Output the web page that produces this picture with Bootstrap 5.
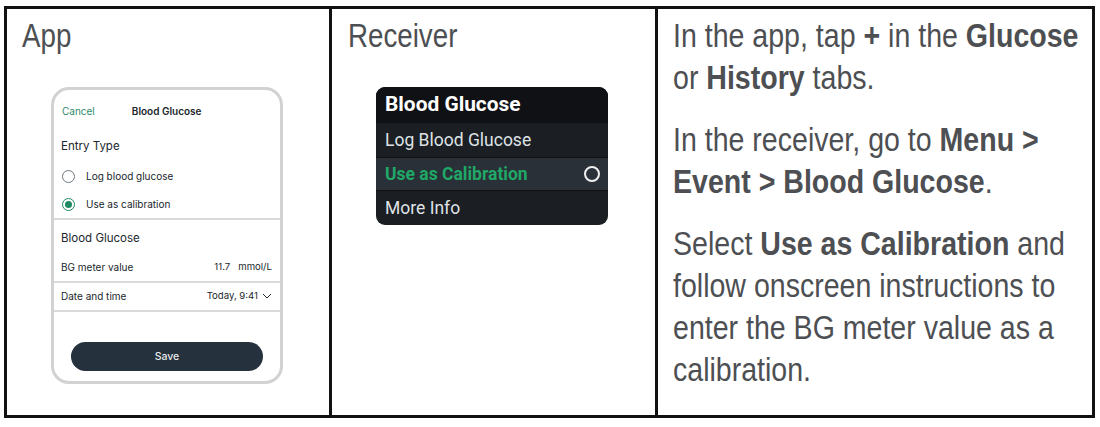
<!DOCTYPE html>
<html lang="en">
<head>
<meta charset="UTF-8">
<title>Use as Calibration</title>
<link rel="stylesheet" href="https://cdn.jsdelivr.net/npm/bootstrap@5.3.0/dist/css/bootstrap.min.css">
<style>
html, body { background: #fff; height: 427px; overflow: hidden; }
body { padding: 6px 5px 9px 4px; }
.frame { height: 412px; border: 3px solid #111; font-family: "Liberation Sans", sans-serif; color: #4d4f53; }
.pane-a { width: 325px; padding: 6px 0 0 15px; border-right: 3px solid #111; }
.pane-b { width: 326px; padding: 6px 0 0 16px; border-right: 3px solid #111; }
.pane-c { flex: 1; padding: 6px 0 0 15px; overflow: hidden; }
.pane-title { font-size: 33px; line-height: 42px; transform: scaleX(.84); transform-origin: left top; }
.copy { width: 480px; font-size: 33px; line-height: 42px; white-space: nowrap; transform: scaleX(.865); transform-origin: left top; }
.copy p { margin: 0 0 20px; }

.phone { width: 232px; height: 297px; margin: 30px 0 0 29px; border: 3px solid #d2d2d2; border-radius: 18px; font-family: Inter, "Liberation Sans", sans-serif; font-size: 10px; color: #20262c; }
.phone-head { height: 42px; padding: 0 8px; }
.phone-cancel { color: #2f8a68; }
.phone-title { margin-left: 37px; font-weight: 600; }
.phone-label { font-size: 11.5px; padding-left: 7px; }
.label-type { height: 30px; }
.label-bg { height: 36px; padding-top: 2px; }
.radio-row { height: 28px; padding-left: 8px; gap: 11px; }
.radio-dot { width: 13px; height: 13px; border-radius: 50%; border: 1.5px solid #6d7780; flex: none; }
.radio-dot.on { border-color: #1d8a62; padding: 2px; }
.radio-dot.on::after { content: ""; display: block; width: 100%; height: 100%; border-radius: 50%; background: #1d8a62; }
.phone-line { border-top: 2px solid #d9d9d9; }
.phone-row { padding: 0 8px 0 7px; }
.phone-val { font-size: 9.6px; }
.row-meter { height: 25px; padding-bottom: 3px; }
.row-date { height: 27px; }
.save-btn { width: 192px; height: 29px; margin: 30px auto 0; background: #25313c; color: #e8eaec; border-radius: 15px; font-size: 10.5px; font-weight: 500; }

.receiver { width: 232px; height: 138px; margin: 30px 0 0 28px; background: #1b1e23; border-radius: 9px; overflow: hidden; font-family: Roboto, "Liberation Sans", sans-serif; font-size: 17.5px; color: #dfe3e6; }
.rcv-head { height: 36px; background: #101114; color: #fff; font-weight: 700; font-size: 20.9px; padding: 0 9px; }
.rcv-item { height: 34px; padding: 0 8px 0 9px; }
.rcv-item.active { background: #2a3038; color: #1fa866; font-weight: 700; border-top: 1px solid #101114; border-bottom: 1px solid #101114; }
.rcv-ring { width: 16px; height: 16px; border: 2.5px solid #f0f0f0; border-radius: 50%; }
</style>
</head>
<body>
<div class="frame d-flex">
    <div class="pane-a">
        <div class="pane-title">App</div>
        <div class="phone">
            <div class="phone-head d-flex align-items-center">
                <span class="phone-cancel">Cancel</span>
                <span class="phone-title">Blood Glucose</span>
            </div>
            <div class="phone-label label-type d-flex align-items-center">Entry Type</div>
            <div class="radio-row d-flex align-items-center"><span class="radio-dot"></span>Log blood glucose</div>
            <div class="radio-row d-flex align-items-center"><span class="radio-dot on"></span>Use as calibration</div>
            <div class="phone-line"></div>
            <div class="phone-label label-bg d-flex align-items-center">Blood Glucose</div>
            <div class="phone-row row-meter d-flex align-items-center justify-content-between">
                <span>BG meter value</span>
                <span class="phone-val d-flex gap-2"><span>11.7</span><span>mmol/L</span></span>
            </div>
            <div class="phone-line"></div>
            <div class="phone-row row-date d-flex align-items-center justify-content-between">
                <span>Date and time</span>
                <span class="phone-val d-flex align-items-center gap-1">Today, 9:41
                    <svg width="10" height="6" viewBox="0 0 10 6"><path d="M1 1l4 4 4-4" fill="none" stroke="#20262c" stroke-width="1"/></svg>
                </span>
            </div>
            <div class="phone-line"></div>
            <div class="save-btn d-flex align-items-center justify-content-center">Save</div>
        </div>
    </div>
    <div class="pane-b">
        <div class="pane-title">Receiver</div>
        <div class="receiver">
            <div class="rcv-head d-flex align-items-center">Blood Glucose</div>
            <div class="rcv-item d-flex align-items-center">Log Blood Glucose</div>
            <div class="rcv-item active d-flex align-items-center justify-content-between">Use as Calibration<span class="rcv-ring"></span></div>
            <div class="rcv-item d-flex align-items-center">More Info</div>
        </div>
    </div>
    <div class="pane-c">
        <div class="copy">
            <p>In the app, tap <b>+</b> in the <b>Glucose</b><br>or <b>History</b> tabs.</p>
            <p>In the receiver, go to <b>Menu &gt;</b><br><b>Event &gt; Blood Glucose</b>.</p>
            <p>Select <b>Use as Calibration</b> and<br>follow onscreen instructions to<br>enter the BG meter value as a<br>calibration.</p>
        </div>
    </div>
</div>
<script src="https://cdn.jsdelivr.net/npm/bootstrap@5.3.0/dist/js/bootstrap.bundle.min.js"></script>
</body>
</html>
